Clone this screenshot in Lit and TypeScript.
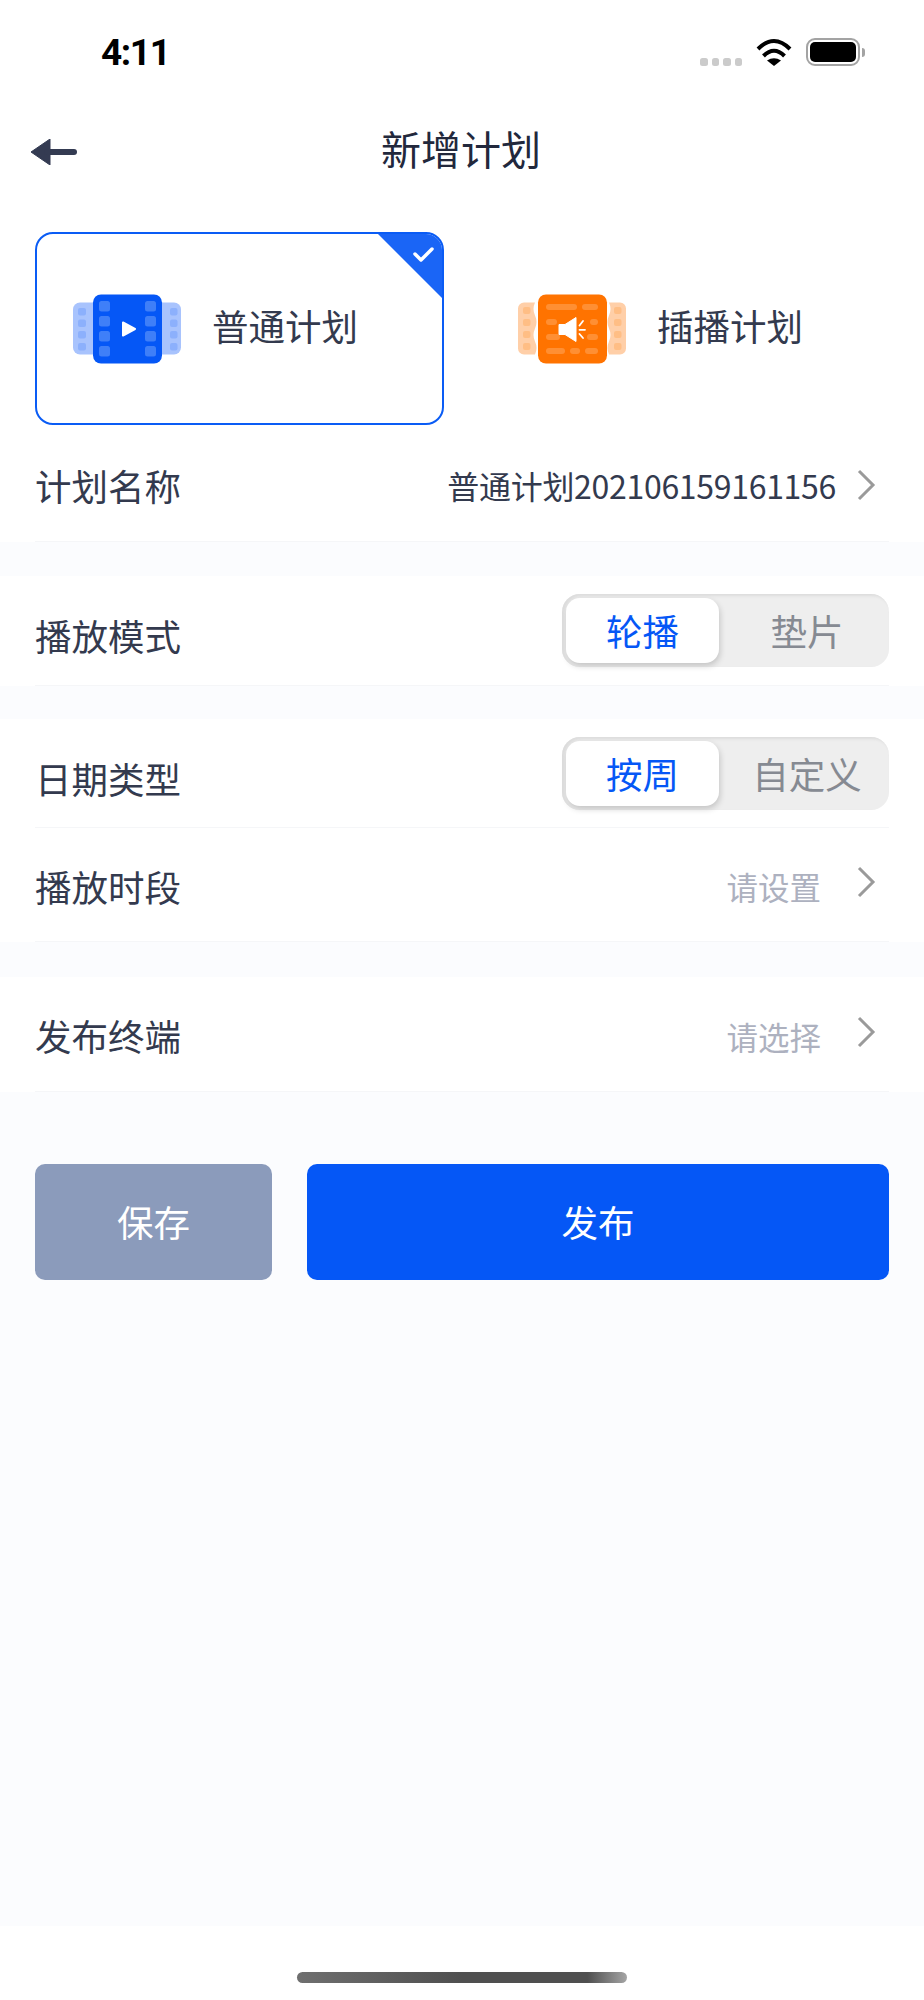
import { LitElement, css, html, svg } from 'lit';
import { customElement } from 'lit/decorators.js';

const chevron = html`<svg class="chevron" viewBox="0 0 20 32" width="20" height="32">
  <path d="M3 2l14 14L3 30" fill="none" stroke="#9a9a9a" stroke-width="3" />
</svg>`;

const blueIcon = html`<svg viewBox="0 0 108 70" width="108" height="70">
  <rect x="0" y="8.5" width="108" height="52" rx="7" fill="#a8c3fd" />
  ${[14, 25.5, 37, 49].map(
    y => svg`<rect x="5" y=${y} width="8" height="7.5" rx="2" fill="#8cb0fc" />
      <rect x="97" y=${y} width="7.5" height="7.5" rx="2" fill="#8cb0fc" />`
  )}
  <rect x="20" y="0.5" width="69" height="69" rx="8" fill="#0557f6" />
  ${[7, 22, 37, 52].map(
    y => svg`<rect x="26" y=${y} width="11" height="10.5" rx="2.5" fill="#3f7ff8" />
      <rect x="72" y=${y} width="11" height="10.5" rx="2.5" fill="#3f7ff8" />`
  )}
  <path d="M50 28.5l12 6.5-12 6.5z" fill="#fff" stroke="#fff" stroke-width="2" stroke-linejoin="round" />
</svg>`;

const bars = [
  [28, 10, 31],
  [64, 10, 16],
  [28, 25, 11],
  [72, 25, 8],
  [28, 40, 14],
  [69, 40, 11],
  [28, 54, 19],
  [52, 54, 10],
  [67, 54, 13],
];

const orangeIcon = html`<svg viewBox="0 0 108 70" width="108" height="70">
  <path
    d="M6 8.5h11q-3 6.5 0 13t0 13 0 13 0 13H6a6 6 0 0 1-6-6v-40a6 6 0 0 1 6-6z"
    fill="#ffcfa8"
  />
  <path
    d="M102 8.5H91q3 6.5 0 13t0 13 0 13 0 13h11a6 6 0 0 0 6-6v-40a6 6 0 0 0-6-6z"
    fill="#ffcfa8"
  />
  ${[13, 25, 37, 49].map(
    y => svg`<rect x="5" y=${y} width="7.5" height="7" rx="2" fill="#ffbe85" />
      <rect x="96" y=${y} width="7.5" height="7" rx="2" fill="#ffbe85" />`
  )}
  <rect x="20" y="0.5" width="69" height="69" rx="8" fill="#ff7300" />
  ${bars.map(
    ([x, y, w]) => svg`<rect x=${x} y=${y} width=${w} height="6" rx="3" fill="#ff8f33" />`
  )}
  <path d="M41 30.5h6l11-7v24l-11-7h-6z" fill="#fff" stroke="#fff" stroke-width="1" stroke-linejoin="round" />
  <path
    d="M61.5 31.5l3.5-4.5M61.5 35.8h5.5M61.5 40l3.5 4"
    fill="none"
    stroke="#fff"
    stroke-width="1.8"
    stroke-linecap="round"
  />
</svg>`;

@customElement('app-root')
export class AppRoot extends LitElement {
  static styles = css`
    :host {
      display: flex;
      flex-direction: column;
      height: 2000px;
      background: #fff;
      color: #333a4e;
      font-family: 'Noto Sans CJK SC', 'Noto Sans', sans-serif;
      font-size: 36.5px;
    }

    .status {
      display: flex;
      align-items: flex-start;
      height: 100px;
      box-sizing: border-box;
      padding: 38px 59px 0 101px;
    }
    .time {
      flex: 1;
      color: #000;
      font-family: Roboto, 'Liberation Sans', sans-serif;
      font-size: 37px;
      font-weight: 700;
      line-height: 29px;
      letter-spacing: -1.4px;
    }
    .signal {
      display: flex;
      gap: 4px;
      margin: 20px 14px 0 0;
    }
    .signal i {
      width: 7.5px;
      height: 8px;
      border-radius: 2.5px;
      background: #cbcbcb;
    }
    .wifi {
      margin: 1px 14px 0 0;
    }
    .battery {
      display: flex;
      align-items: center;
    }
    .battery-body {
      box-sizing: border-box;
      width: 54px;
      height: 28px;
      padding: 2px;
      border: 2px solid #a3a3a3;
      border-radius: 9px;
    }
    .battery-body i {
      display: block;
      height: 100%;
      border-radius: 5px;
      background: #000;
    }
    .battery-nub {
      width: 3px;
      height: 9px;
      margin-left: 2px;
      border-radius: 0 3px 3px 0;
      background: #a3a3a3;
    }

    .nav {
      display: flex;
      align-items: center;
      height: 106px;
      box-sizing: border-box;
      padding: 0 0 1px 31px;
    }
    .back {
      display: block;
      margin-bottom: 1px;
    }
    .title {
      flex: 1;
      margin-left: -79px;
      padding-bottom: 10px;
      text-align: center;
      color: #22283c;
      font-size: 40px;
    }

    .types {
      display: flex;
      gap: 36px;
      padding: 26px 35px 0;
    }
    .type {
      position: relative;
      display: flex;
      align-items: center;
      gap: 31px;
      flex: 1;
      height: 193px;
      box-sizing: border-box;
      padding-left: 36px;
      border: 2px solid transparent;
      border-radius: 18px;
      overflow: hidden;
    }
    .type span {
      padding-bottom: 6px;
    }
    .type.active {
      border-color: #0a5cf5;
    }
    .type svg {
      flex: none;
    }
    .corner {
      position: absolute;
      top: -2px;
      right: -2px;
    }

    .section {
      background: #fff;
    }
    .gap {
      background: #fbfcfe;
    }
    .gap-a {
      height: 34px;
    }
    .gap-b {
      height: 33px;
    }
    .gap-c {
      height: 35px;
    }
    .row {
      display: flex;
      align-items: center;
      justify-content: space-between;
      box-sizing: border-box;
      margin: 0 35px;
      border-bottom: 1px solid #f5f6f8;
    }
    .row-name {
      height: 117px;
      padding-top: 3px;
    }
    .row-name > span {
      margin-top: 2px;
    }
    .row-mode {
      height: 110px;
    }
    .row-date {
      height: 109px;
    }
    .row-time {
      height: 114px;
      padding-top: 3px;
    }
    .row-term {
      height: 115px;
      padding-top: 3px;
    }
    .row-time .chevron,
    .row-term .chevron {
      margin-bottom: 8px;
    }
    .label-low {
      margin-top: 10px;
    }
    .right {
      display: flex;
      align-items: center;
    }
    .value {
      font-size: 32px;
      letter-spacing: -0.3px;
    }
    .placeholder {
      margin-right: 15px;
      color: #adb1bf;
      font-size: 31.5px;
    }
    .chevron {
      margin: 0 13px 0 20px;
    }

    .segment {
      display: flex;
      align-items: stretch;
      width: 327px;
      height: 73px;
      box-sizing: border-box;
      padding: 4px;
      border-radius: 18px;
      background: #eeeeee;
      box-shadow: inset 2px 2px 3px #dcdcdc;
      color: #868a92;
    }
    .seg-on {
      display: flex;
      align-items: center;
      justify-content: center;
      width: 153px;
      border-radius: 14px;
      background: #fff;
      box-shadow: 1px 3px 6px rgba(0, 0, 0, 0.18);
      color: #0557f6;
    }
    .seg-off {
      display: flex;
      align-items: center;
      justify-content: center;
      flex: 1;
      padding-left: 10px;
    }

    .body {
      flex: 1;
      background: #fbfcfe;
      display: flex;
      gap: 35px;
      padding: 72px 35px 0;
      align-items: flex-start;
    }
    .btn {
      display: flex;
      align-items: center;
      justify-content: center;
      height: 116px;
      padding-bottom: 2px;
      box-sizing: border-box;
      border-radius: 10px;
      color: #fff;
    }
    .btn-save {
      width: 237px;
      background: #8b9bbb;
    }
    .btn-publish {
      flex: 1;
      background: #0557f6;
    }

    .home {
      display: flex;
      justify-content: center;
      height: 74px;
      box-sizing: border-box;
      padding-top: 46px;
    }
    .home i {
      width: 330px;
      height: 11px;
      border-radius: 6px;
      background: linear-gradient(90deg, #6f6f6f 0%, #4f4f4f 50%, #4f4f4f 88%, #a5a5a5 100%);
    }
  `;

  render() {
    return html`
      <div class="status">
        <div class="time">4:11</div>
        <div class="signal"><i></i><i></i><i></i><i></i></div>
        <svg class="wifi" viewBox="0 0 36 27" width="36" height="27">
          <path d="M2 10Q18-6 34 10M7.5 17Q18 6.500 28.500 17" fill="none" stroke="#000" stroke-width="4" />
          <path d="M11 21.500Q18 17 25 21.500L18 27z" />
        </svg>
        <div class="battery">
          <div class="battery-body"><i></i></div>
          <div class="battery-nub"></div>
        </div>
      </div>

      <div class="nav">
        <svg class="back" viewBox="0 0 46 26" width="46" height="26">
          <path d="M19 0L0 13l19 13z" fill="#343b52" stroke="#343b52" stroke-width="1" stroke-linejoin="round" />
          <path d="M16 13h27" stroke="#343b52" stroke-width="6" stroke-linecap="round" />
        </svg>
        <div class="title">新增计划</div>
      </div>

      <div class="types">
        <div class="type active">
          ${blueIcon}
          <span>普通计划</span>
          <svg class="corner" viewBox="0 0 68 68" width="68" height="68">
            <path d="M0 0h68v68z" fill="#1a65f6" />
            <path d="M39 22l6 6 11-11" fill="none" stroke="#fff" stroke-width="3.500" stroke-linecap="round" stroke-linejoin="round" />
          </svg>
        </div>
        <div class="type">${orangeIcon}<span>插播计划</span></div>
      </div>

      <div class="section">
        <div class="row row-name">
          <span>计划名称</span>
          <div class="right"><span class="value">普通计划202106159161156</span>${chevron}</div>
        </div>
      </div>
      <div class="gap gap-a"></div>
      <div class="section">
        <div class="row row-mode">
          <span class="label-low">播放模式</span>
          <div class="segment"><div class="seg-on">轮播</div><div class="seg-off">垫片</div></div>
        </div>
      </div>
      <div class="gap gap-b"></div>
      <div class="section">
        <div class="row row-date">
          <span class="label-low">日期类型</span>
          <div class="segment"><div class="seg-on">按周</div><div class="seg-off">自定义</div></div>
        </div>
        <div class="row row-time">
          <span>播放时段</span>
          <div class="right"><span class="placeholder">请设置</span>${chevron}</div>
        </div>
      </div>
      <div class="gap gap-c"></div>
      <div class="section">
        <div class="row row-term">
          <span>发布终端</span>
          <div class="right"><span class="placeholder">请选择</span>${chevron}</div>
        </div>
      </div>

      <div class="body">
        <div class="btn btn-save">保存</div>
        <div class="btn btn-publish">发布</div>
      </div>
      <div class="home"><i></i></div>
    `;
  }
}
